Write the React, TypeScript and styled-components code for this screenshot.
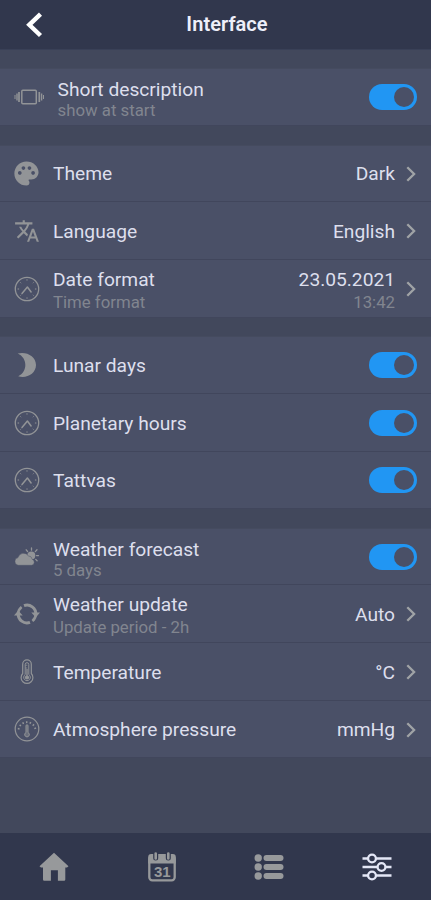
import React from "react";
import styled, { createGlobalStyle } from "styled-components";
import { MdPalette, MdTranslate } from "react-icons/md";

const GlobalStyle = createGlobalStyle`
  * { box-sizing: border-box; }
  body { margin: 0; background: #42485c; font-family: Roboto, "Liberation Sans", sans-serif; }
`;

const Screen = styled.div`
  height: 900px;
  display: flex;
  flex-direction: column;
  background: #42485c;
  overflow: hidden;
`;

const Header = styled.header`
  height: 50px;
  flex: none;
  display: grid;
  grid-template-columns: 68px 1fr 68px;
  align-items: center;
  background: #31374d;
  border-bottom: 1px solid #394057;
`;

const BackButton = styled.button`
  border: 0;
  background: none;
  padding: 1px 0 0;
  display: flex;
  justify-content: center;
`;

const Heading = styled.h1`
  margin: 0;
  padding: 0 0 2px 23px;
  text-align: center;
  font-size: 20px;
  line-height: 24px;
  font-weight: 600;
  letter-spacing: 0.05px;
  color: #eeeffa;
`;

const Settings = styled.main`
  flex: 1;
  padding-top: 19px;
  display: flex;
  flex-direction: column;
  gap: 20px;
`;

const Group = styled.section<{ $lift?: number }>`
  margin-top: ${(p) => -(p.$lift ?? 0)}px;
  box-shadow: 0 -1px 0 #454b5f;
`;

const Row = styled.div<{ $h: number }>`
  height: ${(p) => p.$h}px;
  display: flex;
  align-items: center;
  padding-right: 14px;
  background: #4a5067;
  border-bottom: 1px solid #41465c;
`;

const IconCell = styled.div<{ $wide?: boolean }>`
  width: ${(p) => (p.$wide ? 57.5 : 53)}px;
  padding-left: 14px;
  flex: none;
  display: flex;
  color: #929497;
`;

const Labels = styled.div<{ $right?: boolean; $drop?: number }>`
  flex: ${(p) => (p.$right ? "none" : 1)};
  padding-top: ${(p) => p.$drop ?? 0}px;
  display: flex;
  flex-direction: column;
  text-align: ${(p) => (p.$right ? "right" : "left")};
  white-space: nowrap;
`;

const Title = styled.span<{ $gap?: number }>`
  font-size: 19.2px;
  line-height: ${(p) => p.$gap ?? 22}px;
  color: #dddfed;
`;

const Sub = styled.span`
  font-size: 16.8px;
  line-height: 21px;
  color: #81858f;
`;

const Chevron = styled.svg`
  width: 10px;
  height: 16px;
  margin: 1px 1px 0 11px;
  flex: none;
`;

const Track = styled.button`
  width: 48.5px;
  height: 26px;
  border: 0;
  border-radius: 13px;
  padding: 3px;
  display: flex;
  justify-content: flex-end;
  background: #2196f3;
`;

const Thumb = styled.span`
  width: 20px;
  height: 20px;
  border-radius: 50%;
  background: #4a5067;
`;

const TabBar = styled.nav`
  height: 67px;
  flex: none;
  display: grid;
  grid-template-columns: repeat(4, 1fr);
  background: #31374d;
`;

const Tab = styled.button<{ $active?: boolean }>`
  border: 0;
  padding: 1px 0 0;
  background: none;
  display: flex;
  align-items: center;
  justify-content: center;
  color: ${(p) => (p.$active ? "#e4e7f6" : "#97999b")};
`;

const Carousel = () => (
  <svg width="31" height="26" viewBox="0 0 31 26" fill="none" stroke="currentColor">
    <rect x="7.800" y="6.200" width="14.500" height="13.600" rx="1" strokeWidth="1.500" />
    <path d="M5 8v10M25.300 8v10" strokeWidth="1.700" />
    <path d="M3 9.500v7M27.600 9.500v7" strokeWidth="1.400" />
    <path d="M1 11v4M29.500 11v4" strokeWidth="1" />
  </svg>
);

const Clock = () => (
  <svg width="26" height="26" viewBox="0 0 26 26" fill="none" stroke="currentColor" strokeLinecap="round">
    <circle cx="13" cy="13" r="11.700" strokeWidth="1.300" />
    <path d="m8 17.400 5.400-6.400 3.700 5" strokeWidth="1.500" strokeLinejoin="round" />
    <path d="M13 3.700v.5M13 21.800v.5M4 13h.7M21.300 13h.7M6.700 6.700l.2.2M19.100 6.900l.2-.2M6.700 19.300l.2-.2M19.100 19.100l.2.2" strokeWidth="1" />
  </svg>
);

const Moon = () => (
  <svg width="26" height="26" viewBox="0 0 26 26" fill="currentColor">
    <path d="M3.700 1.600C12.500-.8 22 4.500 22 13S12.500 27 4.200 24.300C13.800 19.700 13.800 6 3.700 1.600Z" />
  </svg>
);

const CloudSun = () => (
  <svg width="26" height="26" viewBox="0 0 26 26">
    <g stroke="currentColor" strokeWidth="1.300" strokeLinecap="round">
      <path d="M17.500 4v2.200M12.200 5.800l1.400 1.700M23 5.800l-1.700 1.800M22.500 11.600h2M21.700 15.400l1.400 1.400" />
    </g>
    <circle cx="17.300" cy="11.500" r="4" fill="currentColor" />
    <path
      d="M4.500 21.300a3.900 3.900 0 0 1-.5-7.700 5.800 5.800 0 0 1 10.500-1.700 4 4 0 0 1 3.700 3.400 3.100 3.100 0 0 1-.5 6Z"
      fill="currentColor"
      stroke="#4a5067"
      strokeWidth="0.500"
    />
  </svg>
);

const Refresh = () => (
  <svg width="26" height="26" viewBox="0 0 26 26" fill="none" stroke="currentColor" strokeWidth="3">
    <path d="M10 4.700A8.800 8.800 0 0 1 21.800 13.500M16 21.300A8.800 8.800 0 0 1 4.200 12.500" />
    <path d="M4.200 13A8.800 8.800 0 0 1 7.600 6M21.800 13a8.800 8.800 0 0 1-3.400 7" strokeWidth="2.600" />
    <path d="m17.300 11.500 4.500 5 4.200-5ZM0 14.500l4.200-5 4.500 5Z" fill="currentColor" stroke="none" />
  </svg>
);

const Thermometer = () => (
  <svg width="26" height="26" viewBox="0 0 26 26" fill="none" stroke="currentColor" strokeWidth="1.200">
    <path d="M8.700 5.200a4.300 4.300 0 0 1 8.600 0v9.300a5.900 5.900 0 1 1-8.600 0Z" />
    <path d="M11.200 5.500a1.800 1.800 0 0 1 3.600 0v10.100a3.300 3.300 0 1 1-3.600 0Z" strokeWidth="1" />
    <path d="M13 10v8" strokeWidth="1.300" />
    <circle cx="13" cy="18.500" r="1.500" fill="currentColor" />
    <path d="M11.300 6.200h2M11.300 9h2" strokeWidth=".8" />
  </svg>
);

const Gauge = () => (
  <svg width="26" height="26" viewBox="0 0 26 26" fill="none" stroke="currentColor">
    <circle cx="13" cy="13" r="11.800" strokeWidth="1.200" />
    <path d="M4.500 13.500a8.600 8.600 0 0 1 17 0" strokeWidth="1.800" strokeDasharray="1.500 2.200" />
    <path d="M12 9.800a1 1 0 0 1 2 0v6.700a2.300 2.300 0 1 1-2 0Z" strokeWidth="1" fill="currentColor" fillOpacity=".45" />
  </svg>
);

const Next = () => (
  <Chevron viewBox="0 0 10 16" fill="none" stroke="#a0a3a6" strokeWidth="2.300">
    <path d="m1.300 1.300 6.800 6.700-6.800 6.700" />
  </Chevron>
);

const Toggle = () => (
  <Track role="switch" aria-checked="true">
    <Thumb />
  </Track>
);

interface Setting {
  icon: React.ReactNode;
  title: string;
  sub?: string;
  value?: string;
  subValue?: string;
  h: number;
  gap?: number;
  drop?: number;
  wide?: boolean;
}

const groups: { lift?: number; rows: Setting[] }[] = [
  { rows: [{ icon: <Carousel />, title: "Short description", sub: "show at start", h: 57, gap: 21, drop: 5, wide: true }] },
  {
    rows: [
      { icon: <MdPalette size={29} viewBox="1.700 0 24 24" />, title: "Theme", value: "Dark", h: 56, drop: 1 },
      { icon: <MdTranslate size={26} />, title: "Language", value: "English", h: 58, drop: 2 },
      { icon: <Clock />, title: "Date format", sub: "Time format", value: "23.05.2021", subValue: "13:42", h: 58, gap: 24, drop: 3 },
    ],
  },
  {
    lift: 1,
    rows: [
      { icon: <Moon />, title: "Lunar days", h: 57, drop: 1 },
      { icon: <Clock />, title: "Planetary hours", h: 58, drop: 2 },
      { icon: <Clock />, title: "Tattvas", h: 57, drop: 1 },
    ],
  },
  {
    rows: [
      { icon: <CloudSun />, title: "Weather forecast", sub: "5 days", h: 56, gap: 21, drop: 6 },
      { icon: <Refresh />, title: "Weather update", sub: "Update period - 2h", value: "Auto", h: 58, gap: 24, drop: 3 },
      { icon: <Thermometer />, title: "Temperature", value: "°C", h: 58, drop: 2 },
      { icon: <Gauge />, title: "Atmosphere pressure", value: "mmHg", h: 57, drop: 1 },
    ],
  },
];

export default function App() {
  return (
    <>
      <GlobalStyle />
      <Screen>
        <Header>
          <BackButton aria-label="Back">
            <svg width="18" height="26" viewBox="0 0 18 26" fill="none" stroke="#fff" strokeWidth="4.400">
              <path d="M15.500 2.200 4.300 12.800l11.200 10.700" />
            </svg>
          </BackButton>
          <Heading>Interface</Heading>
        </Header>
        <Settings>
          {groups.map((group, i) => (
            <Group key={i} $lift={group.lift}>
              {group.rows.map((r) => (
                <Row key={r.title} $h={r.h}>
                  <IconCell $wide={r.wide}>{r.icon}</IconCell>
                  <Labels $drop={r.drop}>
                    <Title $gap={r.gap}>{r.title}</Title>
                    {r.sub && <Sub>{r.sub}</Sub>}
                  </Labels>
                  {r.value ? (
                    <>
                      <Labels $right $drop={r.drop}>
                        <Title $gap={r.subValue ? r.gap : undefined}>{r.value}</Title>
                        {r.subValue && <Sub>{r.subValue}</Sub>}
                      </Labels>
                      <Next />
                    </>
                  ) : (
                    <Toggle />
                  )}
                </Row>
              ))}
            </Group>
          ))}
        </Settings>
        <TabBar>
          <Tab aria-label="Home">
            <svg width="30" height="30" viewBox="0 0 30 30" fill="currentColor">
              <path d="M15 .8 29.500 14.200 28 15.600h-1.700v12a1.200 1.200 0 0 1-1.200 1.200h-6.200V18.200h-7v10.600H5.200A1.200 1.200 0 0 1 4 27.600v-12H2L.5 14.200Z" />
            </svg>
          </Tab>
          <Tab aria-label="Calendar">
            <svg width="30" height="30" viewBox="0 0 30 30">
              <rect x="2.300" y="4.300" width="25.400" height="24" rx="3" fill="none" stroke="currentColor" strokeWidth="2.300" />
              <path d="M1.200 11.500V5a3 3 0 0 1 3-3h21.600a3 3 0 0 1 3 3v6.500Z" fill="currentColor" />
              <path d="M8.700 2v4M21.300 2v4" stroke="#31374d" strokeWidth="5" strokeLinecap="round" />
              <path d="M8.700 1.500v5M21.300 1.500v5" stroke="currentColor" strokeWidth="2.600" strokeLinecap="round" />
              <text x="15.300" y="24.500" textAnchor="middle" fontFamily="Liberation Sans, sans-serif" fontWeight="700" fontSize="15" fill="currentColor">31</text>
            </svg>
          </Tab>
          <Tab aria-label="List">
            <svg width="30" height="30" viewBox="0 0 30 30" fill="currentColor">
              {[6, 15, 24].map((y) => (
                <g key={y}>
                  <circle cx="4.200" cy={y} r="3.700" />
                  <rect x="9.500" y={y - 3} width="20" height="6" rx="3" />
                </g>
              ))}
            </svg>
          </Tab>
          <Tab $active aria-label="Settings">
            <svg width="30" height="30" viewBox="0 0 30 30" fill="none" stroke="currentColor" strokeWidth="2.500">
              <path d="M.5 6.500H6M14 6.500h15.500M.5 15H15.500M23.500 15h6M.5 23.500H6M14 23.500h15.500" />
              <circle cx="10" cy="6.500" r="3.900" strokeWidth="2.300" />
              <circle cx="19.500" cy="15" r="3.900" strokeWidth="2.300" />
              <circle cx="10" cy="23.500" r="3.900" strokeWidth="2.300" />
            </svg>
          </Tab>
        </TabBar>
      </Screen>
    </>
  );
}
